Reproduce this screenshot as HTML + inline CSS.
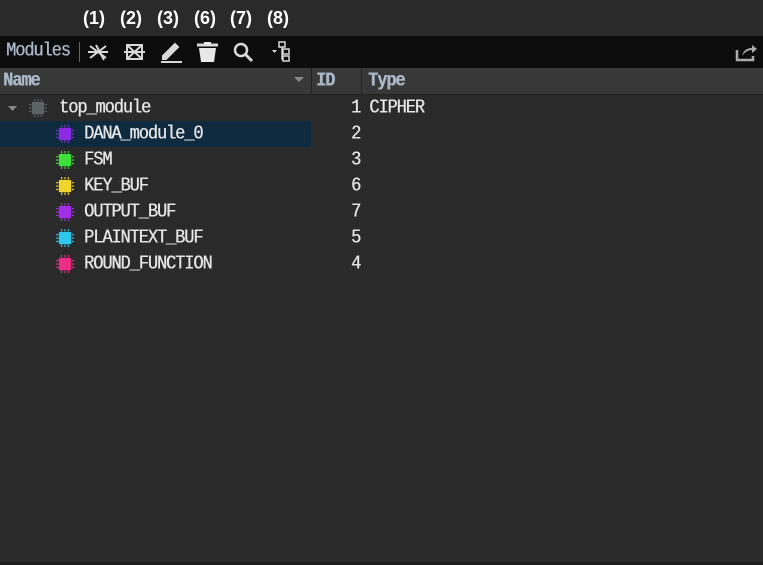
<!DOCTYPE html>
<html><head><style>
*{margin:0;padding:0;box-sizing:border-box}
body{width:763px;height:565px;background:#2a2a2a;overflow:hidden;position:relative;font-family:"Liberation Mono","DejaVu Sans Mono",monospace;color:#e4e4e4}
.lbl{position:absolute;top:8px;font-family:"Liberation Sans",sans-serif;font-size:18px;font-weight:bold;color:#fff}
.tb{position:absolute;left:0;top:36px;width:763px;height:32px;background:#0c0c0d}
.hd{position:absolute;left:0;top:68px;width:763px;height:27px;background:#383838;border-bottom:1px solid #222}
.t{position:absolute;font-size:17px;letter-spacing:-1.1px;line-height:18px;white-space:pre;text-shadow:0.4px 0 0 currentColor;transform:scaleY(1.12);transform-origin:0 0;margin-top:0px}
.chip{position:absolute;width:18px;height:18px}
</style></head><body>
<div class="lbl" style="left:83px">(1)</div>
<div class="lbl" style="left:120px">(2)</div>
<div class="lbl" style="left:157px">(3)</div>
<div class="lbl" style="left:194px">(6)</div>
<div class="lbl" style="left:230px">(7)</div>
<div class="lbl" style="left:267px">(8)</div>
<div class="tb"></div>
<div class="t" style="left:6px;top:42px;color:#a9b7c6">Modules</div>
<div style="position:absolute;left:79px;top:42px;width:1px;height:20px;background:#666"></div>
<svg width="763" height="70" style="position:absolute;left:0;top:0" fill="none" stroke="#d8d8d8" stroke-width="2">
<path d="M88 52h20M90 46l16 12M90 58l16-12M96 45l8 15"/>
<rect x="127" y="45" width="15" height="14"/><path d="M124 52h21M127 45l15 14M142 45l-15 14"/>
<path d="M163 56l12-12 3 3-12 12h-3z" fill="#d8d8d8"/><path d="M161 62h21"/>
<path d="M197 45h21" stroke-width="3"/><path d="M199 48h17l-2 14h-13z" fill="#e8e8e8" stroke="none"/><rect x="204" y="42" width="7" height="3" fill="#e8e8e8" stroke="none"/>
<circle cx="241" cy="50" r="6" stroke-width="2.5"/><path d="M245 54l7 7" stroke-width="3"/>
<rect x="279" y="42" width="6" height="5" stroke-width="1.5"/><rect x="283" y="49" width="6" height="5" stroke-width="1.5"/><rect x="283" y="56" width="6" height="5" stroke-width="1.5"/><path d="M282 47v12h1" stroke-width="1.5"/><path d="M272 50h5l-2.5 3z" fill="#d8d8d8" stroke="none"/>
<path d="M737 50v10h16v-4" stroke="#aaa" stroke-width="2.5"/><path d="M742 56q2-8 10-8v-3l5 4-5 4v-3q-6 0-10 6z" fill="#aaa" stroke="none"/>
</svg>
<div class="hd"></div>
<div style="position:absolute;left:311px;top:68px;width:1px;height:27px;background:#222"></div>
<div style="position:absolute;left:361px;top:68px;width:1px;height:27px;background:#222"></div>
<div class="t" style="left:3px;top:72px;font-weight:bold;color:#a9b7c6">Name</div>
<div class="t" style="left:316px;top:72px;font-weight:bold;color:#a9b7c6">ID</div>
<div class="t" style="left:368px;top:72px;font-weight:bold;color:#a9b7c6">Type</div>
<svg width="10" height="6" style="position:absolute;left:294px;top:77px"><path d="M0 0h10l-5 5z" fill="#888"/></svg>
<div style="position:absolute;left:0;top:121px;width:311px;height:26px;background:#0e2a3f"></div>
<svg width="10" height="6" style="position:absolute;left:8px;top:106px"><path d="M0 0h9l-4.5 5z" fill="#888"/></svg>
<svg width="0" height="0"><defs><symbol id="c" viewBox="0 0 16 16"><rect x="2.5" y="2.5" width="11" height="11" rx="1"/><path d="M5 0v16M8 0v16M11 0v16M0 5h16M0 8h16M0 11h16" stroke-width="1" stroke="currentColor" stroke-dasharray="2 12"/></symbol></defs></svg>
<svg class="chip" style="left:29px;top:99px;color:#5a6465;fill:#5a6465"><use href="#c"/></svg>
<svg class="chip" style="left:56px;top:125px;color:#8a2be2;fill:#8a2be2"><use href="#c"/></svg>
<svg class="chip" style="left:56px;top:151px;color:#3fe03a;fill:#3fe03a"><use href="#c"/></svg>
<svg class="chip" style="left:56px;top:177px;color:#f0d62a;fill:#f0d62a"><use href="#c"/></svg>
<svg class="chip" style="left:56px;top:203px;color:#a12ee6;fill:#a12ee6"><use href="#c"/></svg>
<svg class="chip" style="left:56px;top:229px;color:#2ec8ee;fill:#2ec8ee"><use href="#c"/></svg>
<svg class="chip" style="left:56px;top:255px;color:#ee2e86;fill:#ee2e86"><use href="#c"/></svg>
<div class="t" style="left:59px;top:99px">top_module</div>
<div class="t" style="left:84px;top:125px">DANA_module_0</div>
<div class="t" style="left:84px;top:151px">FSM</div>
<div class="t" style="left:84px;top:177px">KEY_BUF</div>
<div class="t" style="left:84px;top:203px">OUTPUT_BUF</div>
<div class="t" style="left:84px;top:229px">PLAINTEXT_BUF</div>
<div class="t" style="left:84px;top:255px">ROUND_FUNCTION</div>
<div class="t" style="left:351px;top:99px">1 CIPHER</div>
<div class="t" style="left:351px;top:125px">2</div>
<div class="t" style="left:351px;top:151px">3</div>
<div class="t" style="left:351px;top:177px">6</div>
<div class="t" style="left:351px;top:203px">7</div>
<div class="t" style="left:351px;top:229px">5</div>
<div class="t" style="left:351px;top:255px">4</div>
<div style="position:absolute;left:0;top:562px;width:763px;height:3px;background:#1e1e1e"></div>
</body></html>
